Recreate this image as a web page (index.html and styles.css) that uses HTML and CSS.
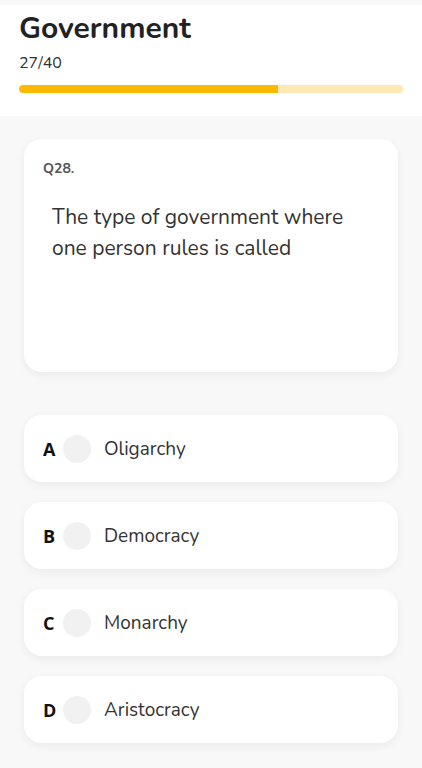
FILE: index.html
```html
<!DOCTYPE html>
<html lang="en">
	<head>
		<meta charset="UTF-8">
		<title>Government quiz</title>
		<link rel="stylesheet" href="styles.css">
	</head>
	<body>
		<div class="app">
			<header class="quizHeader">
				<h1>Government</h1>
				<p class="counter">27/40</p>
				<div class="progress">
					<div class="progressFill" style="width: 67.5%"></div>
				</div>
			</header>
			<main class="quizBody">
				<section class="questionCard">
					<p class="qNumber">Q28.</p>
					<p class="qText">The type of government where one person rules is called</p>
				</section>
				<ul class="options">
					<li class="option"><b class="letter">A</b><span class="radio"></span><span class="answer">Oligarchy</span></li>
					<li class="option"><b class="letter">B</b><span class="radio"></span><span class="answer">Democracy</span></li>
					<li class="option"><b class="letter">C</b><span class="radio"></span><span class="answer">Monarchy</span></li>
					<li class="option"><b class="letter">D</b><span class="radio"></span><span class="answer">Aristocracy</span></li>
				</ul>
			</main>
		</div>
	</body>
</html>
```

FILE: styles.css
```css
body {
	margin: 0;
	font-family: "Nunito", "Lato", "Open Sans", sans-serif;
	background-color: #f8f8f8;
	color: #333333;
}
.app {
	padding-top: 5px;
}
.quizHeader {
	background-color: white;
	padding: 6px 19px 23px 19px;
}
.quizHeader h1 {
	margin: 0;
	font-size: 30px;
	font-weight: 700;
	color: #222222;
	line-height: 36px;
}
.counter {
	margin: 6px 0 0 0;
	font-size: 16px;
	line-height: 20px;
	color: #333333;
}
.progress {
	margin-top: 12px;
	height: 8px;
	border-radius: 4px;
	background-color: #ffe8b3;
	overflow: hidden;
}
.progressFill {
	height: 100%;
	background-color: #ffb800;
	border-radius: 4px 0 0 4px;
}
.quizBody {
	padding: 23px 24px;
}
.questionCard {
	background-color: white;
	border-radius: 18px;
	box-shadow: 0 3px 10px rgba(0, 0, 0, 0.06);
	height: 233px;
	box-sizing: border-box;
	padding: 20px 19px;
}
.qNumber {
	margin: 0;
	font-size: 14px;
	font-weight: 700;
	color: #555555;
	line-height: 20px;
}
.qText {
	margin: 23px 0 0 9px;
	max-width: 305px;
	font-size: 21px;
	line-height: 31px;
	color: #333333;
}
.options {
	list-style-type: none;
	margin: 43px 0 0 0;
	padding: 0;
	display: flex;
	flex-direction: column;
	gap: 20px;
}
.option {
	background-color: white;
	border-radius: 18px;
	box-shadow: 0 3px 10px rgba(0, 0, 0, 0.06);
	height: 67px;
	display: flex;
	align-items: center;
	padding: 0 19px;
}
.letter {
	font-size: 18px;
	font-weight: 700;
	color: #111111;
	width: 20px;
	font-family: "Open Sans", sans-serif;
}
.radio {
	width: 28px;
	height: 28px;
	border-radius: 50%;
	background-color: #f1f1f1;
}
.answer {
	margin-left: 13px;
	font-size: 19px;
	color: #333333;
}
```
